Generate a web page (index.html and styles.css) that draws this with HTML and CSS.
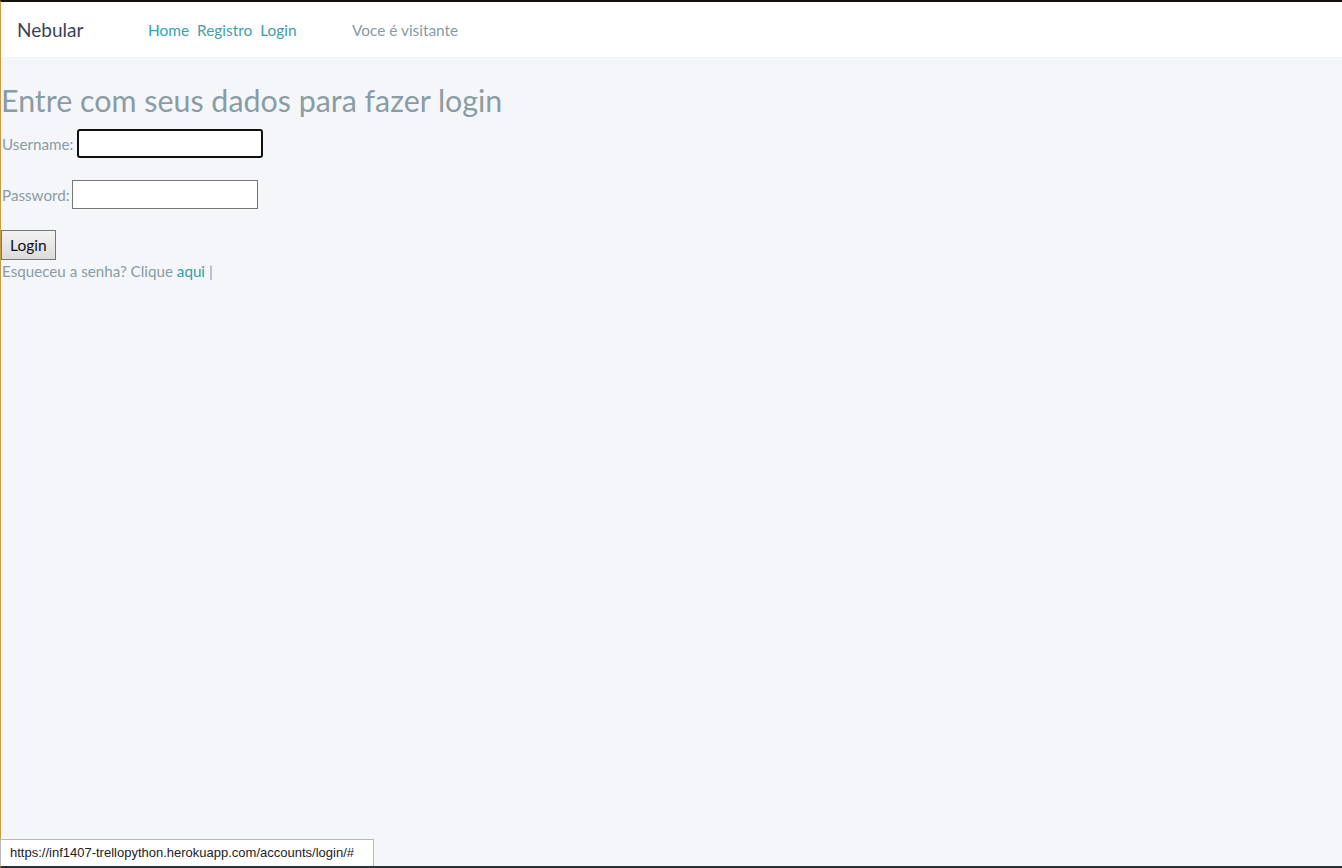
FILE: index.html
```html
<!DOCTYPE html>
<html lang="pt">
<head>
<meta charset="utf-8">
<title>Login</title>
<link rel="stylesheet" href="styles.css">
</head>
<body>
<div class="frame">
  <nav class="navbar">
    <span class="brand">Nebular</span>
    <div class="links">
      <a href="#" class="link home">Home</a>
      <a href="#" class="link reg">Registro</a>
      <a href="#" class="link login">Login</a>
    </div>
    <span class="status">Voce é visitante</span>
  </nav>
  <main class="content">
    <h1 class="title">Entre com seus dados para fazer login</h1>
    <form class="form">
      <p class="row"><label class="lbl">Username:</label><input class="inp focused" type="text"></p>
      <p class="row"><label class="lbl">Password:</label><input class="inp" type="password"></p>
      <button class="btn" type="button">Login</button>
    </form>
    <p class="forgot">Esqueceu a senha? Clique <a href="#" class="aqui">aqui</a> <span class="sep">|</span></p>
  </main>
  <div class="statusbar">https://inf1407-trellopython.herokuapp.com/accounts/login/#</div>
</div>
</body>
</html>
```
FILE: styles.css
```css
html, body {
  margin: 0;
  padding: 0;
  height: 100%;
}
body {
  font-family: "Lato", "Noto Sans", sans-serif;
  background: #f5f6fa;
}
.frame {
  position: relative;
  box-sizing: border-box;
  height: 868px;
  border-top: 2px solid #16110d;
  border-left: 1px solid #c39a52;
  border-bottom: 2px solid #263238;
  background: #f5f6fa;
  display: flex;
  flex-direction: column;
}
.navbar {
  height: 55px;
  background: #ffffff;
  display: flex;
  align-items: center;
  padding-left: 16px;
  flex-shrink: 0;
}
.brand {
  font-size: 19px;
  color: #3b4256;
  width: 131px;
}
.links {
  display: flex;
  gap: 8px;
  width: 204px;
}
.link {
  font-size: 15.4px;
  text-decoration: none;
}
.home { color: #2fa6b0; }
.reg { color: #45a0a0; }
.login { color: #3f9ca4; }
.status {
  font-size: 15.4px;
  color: #8a9aa1;
}
.content {
  padding-left: 1px;
  color: #8a9ba3;
}
.title {
  font-weight: 400;
  font-size: 30.4px;
  margin: 25px 0 11px -1px;
  line-height: 36px;
  color: #8a9ca4;
}
.form {
  margin: 0;
}
.row {
  margin: 0 0 22px 0;
  display: flex;
  align-items: center;
  height: 29px;
  font-size: 15.2px;
}
.lbl {
  margin-right: 2px;
}
.row:first-child .lbl {
  margin-right: 4px;
}
.inp {
  box-sizing: border-box;
  width: 186px;
  height: 29px;
  border: 1px solid #767676;
  background: #fff;
  padding: 0;
}
.focused {
  border: 2px solid #101010;
  border-radius: 3px;
}
.btn {
  font-family: "Lato", "Noto Sans", sans-serif;
  font-size: 15.5px;
  height: 30px;
  padding: 0 8px;
  background: linear-gradient(#f2f2f2, #dcdcdc);
  border: 1px solid #767676;
  color: #111;
  margin-top: -1px;
  margin-left: -1px;
}
.forgot {
  margin: 2px 0 0 0;
  font-size: 15.2px;
  color: #8a9ba3;
}
.aqui {
  color: #2ea0a0;
  text-decoration: none;
}
.sep {
  color: #7aa8c8;
}
.statusbar {
  position: absolute;
  left: -1px;
  bottom: 0;
  box-sizing: border-box;
  height: 27px;
  width: 374px;
  background: #fff;
  border: 1px solid #b8b8b8;
  border-bottom: none;
  font-family: "Liberation Sans", "DejaVu Sans", sans-serif;
  font-size: 13px;
  color: #222;
  padding: 5px 0 0 9px;
}
```
